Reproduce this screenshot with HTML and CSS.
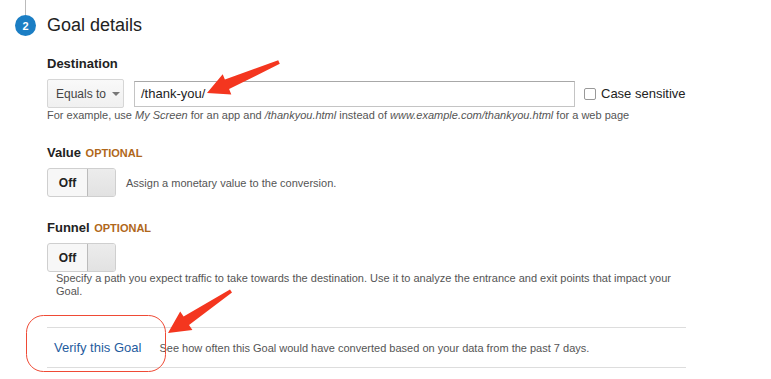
FILE: index.html
```html
<!DOCTYPE html>
<html lang="en">
<head>
  <meta charset="UTF-8" />
  <title>Goal details</title>
  <link rel="stylesheet" href="styles.css">
</head>
<body>
  <div class="page">
    <div class="rail"></div>
    <div class="step-head">
      <span class="step-num">2</span>
      <h2>Goal details</h2>
    </div>

    <div class="content">
      <div class="field">
        <div class="label">Destination</div>
        <div class="dest-row">
          <div class="select">Equals to <span class="caret"></span></div>
          <div class="text-input">/thank-you/</div>
          <label class="check"><span class="box"></span>Case sensitive</label>
        </div>
        <p class="hint">For example, use <i>My Screen</i> for an app and <i>/thankyou.html</i> instead of <i>www.example.com/thankyou.html</i> for a web page</p>
      </div>

      <div class="field">
        <div class="label">Value <span class="optional">OPTIONAL</span></div>
        <div class="toggle-row">
          <div class="toggle"><span class="off">Off</span><span class="knob"></span></div>
          <span class="desc">Assign a monetary value to the conversion.</span>
        </div>
      </div>

      <div class="field">
        <div class="label">Funnel <span class="optional">OPTIONAL</span></div>
        <div class="toggle-row">
          <div class="toggle"><span class="off">Off</span><span class="knob"></span></div>
        </div>
        <p class="funnel-desc">Specify a path you expect traffic to take towards the destination. Use it to analyze the entrance and exit points that impact your Goal.</p>
      </div>

      <div class="verify">
        <a href="#" class="verify-link">Verify this Goal</a>
        <span class="verify-text">See how often this Goal would have converted based on your data from the past 7 days.</span>
      </div>
    </div>
  </div>

  <svg class="marks" width="771" height="379" viewBox="0 0 771 379">
    <polygon points="207,93 222.7,74.2 224.9,79.5 278.2,60.2 279.8,63.8 229.1,89.1 231.3,94.4" />
    <polygon points="168,333 180.2,311.6 183.6,316.6 230,289.4 232,292.6 189,325 192.4,330" />
    <rect class="ring" x="26.5" y="315.5" width="139" height="56" rx="17" />
  </svg>
</body>
</html>
```

FILE: styles.css
```css
body {
  margin: 0;
  font-family: 'Liberation Sans', Arial, sans-serif;
  color: #222;
  background: #fff;
}
.page {
  position: relative;
  padding-left: 15px;
}
.rail {
  width: 1px;
  height: 15px;
  margin-left: 10px;
  background: #bbb;
}
.step-head {
  display: flex;
  align-items: center;
  gap: 11px;
  height: 21px;
}
.step-num {
  width: 21px;
  height: 21px;
  border-radius: 50%;
  background: #1b7ec4;
  color: #fff;
  font-size: 11px;
  font-weight: bold;
  display: flex;
  align-items: center;
  justify-content: center;
}
h2 {
  margin: 0;
  font-size: 18px;
  font-weight: normal;
  color: #222;
}
.content {
  margin-left: 32px;
  width: 639px;
}
.field {
  margin-top: 20px;
}
.field + .field {
  margin-top: 23px;
}
.label {
  font-size: 13px;
  font-weight: bold;
  line-height: 16px;
  color: #222;
}
.optional {
  font-size: 11px;
  color: #b0671a;
  margin-left: 1px;
}
.dest-row {
  display: flex;
  align-items: center;
  margin-top: 7px;
  height: 29px;
}
.select {
  box-sizing: border-box;
  flex: none;
  width: 77px;
  height: 29px;
  border: 1px solid #d6d6d6;
  border-radius: 2px;
  background: linear-gradient(#f9f9f9, #f0f0f0);
  font-size: 12px;
  color: #444;
  white-space: nowrap;
  display: flex;
  align-items: center;
  padding-left: 8px;
}
.caret {
  margin-left: 6px;
  border-left: 4px solid transparent;
  border-right: 4px solid transparent;
  border-top: 4px solid #777;
}
.text-input {
  box-sizing: border-box;
  flex: none;
  width: 441px;
  height: 26px;
  margin-left: 10px;
  border: 1px solid #c4c4c4;
  border-top-color: #a8a8a8;
  font-size: 13px;
  color: #222;
  padding-left: 6px;
  display: flex;
  align-items: center;
}
.check {
  display: flex;
  align-items: center;
  margin-left: 9px;
  font-size: 13px;
  color: #222;
  white-space: nowrap;
}
.box {
  box-sizing: border-box;
  width: 12px;
  height: 12px;
  border: 1px solid #999;
  border-radius: 2px;
  margin-right: 5px;
}
.hint {
  margin: 1px 0 0;
  font-size: 11px;
  line-height: 13px;
  color: #555;
}
.toggle-row {
  display: flex;
  align-items: center;
  margin-top: 7px;
}
.toggle {
  box-sizing: border-box;
  display: flex;
  width: 69px;
  height: 29px;
  border: 1px solid #cfcfcf;
  border-radius: 3px;
  background: #f7f7f7;
}
.off {
  width: 39px;
  display: flex;
  align-items: center;
  justify-content: center;
  font-size: 12px;
  font-weight: bold;
  color: #222;
}
.knob {
  flex: 1;
  border-left: 1px solid #bbb;
  border-radius: 0 2px 2px 0;
  background: linear-gradient(#ececec, #e2e2e2);
}
.desc {
  margin-left: 10px;
  font-size: 11px;
  color: #555;
}
.funnel-desc {
  margin: 0;
  padding-left: 9px;
  font-size: 11px;
  line-height: 13px;
  color: #555;
}
.verify {
  margin-top: 29px;
  height: 39px;
  border-top: 1px solid #ddd;
  border-bottom: 1px solid #ddd;
  display: flex;
  align-items: center;
}
.verify-link {
  margin-left: 7px;
  font-size: 13px;
  color: #1f5c9e;
  text-decoration: none;
}
.verify-text {
  margin-left: 18px;
  font-size: 11px;
  color: #555;
}
.marks {
  position: absolute;
  top: 0;
  left: 0;
  pointer-events: none;
}
.marks polygon {
  fill: #f4361f;
}
.ring {
  fill: none;
  stroke: #ef4a35;
  stroke-width: 1;
}
```
